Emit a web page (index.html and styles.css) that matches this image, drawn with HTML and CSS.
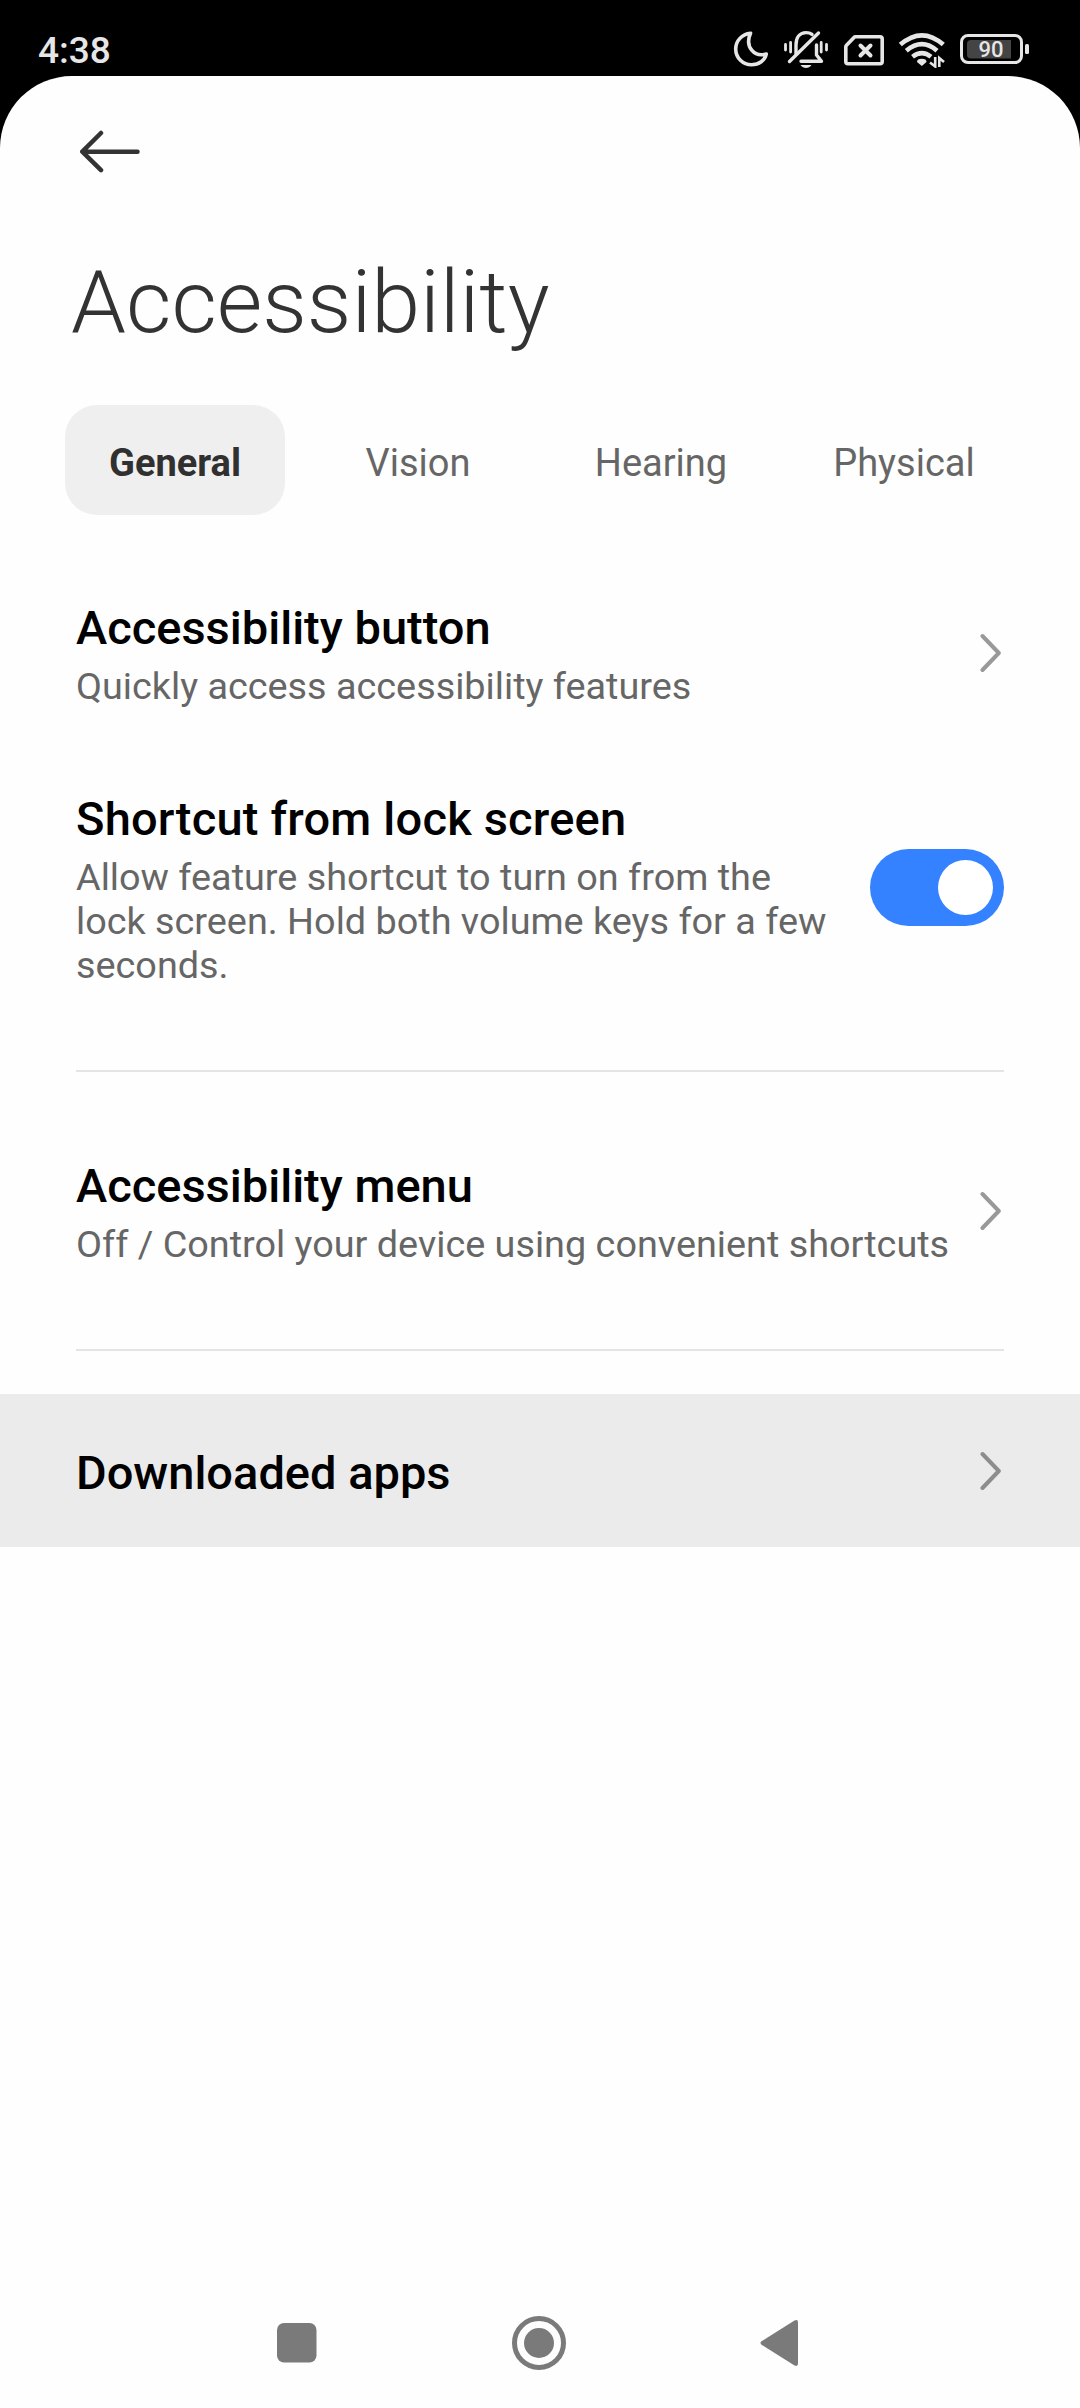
FILE: index.html
```html
<!DOCTYPE html>
<html lang="en">
<head>
<meta charset="utf-8">
<title>Accessibility</title>
<link rel="stylesheet" href="styles.css">
</head>
<body>
<div class="phone">
  <header class="status">
    <span class="clock">4:38</span>
    <div class="status-icons">
      <svg class="moon" width="38" height="40" viewBox="732 29 38 40" fill="none" stroke="#e6e6e6" stroke-width="3.6" stroke-linejoin="round"><path d="M750.500 33.200C742 34 735.700 41 735.700 49C735.700 58 743 64.700 751.500 64.700C759 64.700 765 60.500 766.300 54C754.500 57.500 744.500 47 750.500 33.200Z"/></svg>
      <svg class="bell" width="46" height="40" viewBox="783 29 46 40" fill="none" stroke="#e6e6e6" stroke-width="3.4" stroke-linecap="round" stroke-linejoin="round"><path d="M796 54V45C796 37 800 32.600 806 32.600C808.500 32.600 810.500 33.200 812 34.400"/><path d="M801 61.200H821.500L816.500 55V45"/><path d="M789.500 61.500L818.500 33"/><path d="M785.500 44.500V50M790.600 42.500V52M821.200 42.500V52M826.500 44.500V50" stroke-width="2.8"/><path d="M800.500 65H811.500C809 69 803 69 800.500 65Z" fill="#e6e6e6" stroke="none"/></svg>
      <svg class="sim" width="42" height="34" viewBox="843 33 42 34" fill="none" stroke="#e6e6e6" stroke-width="3.600" stroke-linecap="round" stroke-linejoin="round"><path d="M855.500 36.800H880Q882.200 36.800 882.200 39V61.500Q882.200 63.800 880 63.800H848Q845.800 63.800 845.800 61.500V47Q845.800 46 846.500 45.300L854 37.500Q854.600 36.800 855.500 36.800Z"/><path d="M860.500 49.500L870.500 59.500M870.500 49.500L860.500 59.500" stroke-width="4" transform="translate(0 -4)"/></svg>
      <svg class="wifi" width="48" height="36" viewBox="898 32 48 36" fill="none" stroke="#e6e6e6" stroke-width="4.600"><path d="M900.300 44.600Q922 26 943.300 44.600"/><path d="M906.300 50.700Q922 37.500 937 50.700"/><path d="M912.500 56.800Q922 49.500 931 56.800"/><path d="M917 62Q917 58.800 921.800 58.800Q926.500 58.800 926.500 62L921.800 66Z" fill="#e6e6e6" stroke="none"/><path d="M935.200 57V66.500L930 62.500M939.300 67V58L944 62" stroke-width="2.600"/></svg>
      <svg class="battery" width="70" height="32" viewBox="960 33 70 32" fill="none"><rect x="961.500" y="35.500" width="60" height="27" rx="6.500" stroke="#e6e6e6" stroke-width="3"/><path d="M971 40H1011V58.500H971Q967 58.500 967 54.500V44Q967 40 971 40Z" fill="#444"/><rect x="1025" y="44" width="4" height="10" rx="1.500" fill="#e6e6e6"/><text class="level" x="991" y="57.300" text-anchor="middle">90</text></svg>
    </div>
  </header>
  <main class="sheet">
    <nav class="topbar">
      <svg width="62" height="44" viewBox="79 130 62 44" fill="none" stroke="#333" stroke-width="4.500" stroke-linecap="round" stroke-linejoin="round"><path d="M101 133L82.300 151.700L101 170.200M83 151.700H137.500"/></svg>
    </nav>
    <h1 class="title">Accessibility</h1>
    <div class="tabs">
      <div class="tab active">General</div>
      <div class="tab">Vision</div>
      <div class="tab">Hearing</div>
      <div class="tab">Physical</div>
    </div>
    <section class="list">
      <div class="row">
        <div class="text"><h2>Accessibility button</h2><p>Quickly access accessibility features</p></div>
        <svg class="chevron" width="24" height="40" viewBox="0 0 24 40"><path d="M2.500 3L18.800 20L2.500 37"/></svg>
      </div>
      <div class="row tall">
        <div class="text"><h2>Shortcut from lock screen</h2><p>Allow feature shortcut to turn on from the lock screen. Hold both volume keys for a few seconds.</p></div>
        <div class="switch"><div class="knob"></div></div>
      </div>
      <div class="divider"></div>
      <div class="row">
        <div class="text"><h2>Accessibility menu</h2><p>Off / Control your device using convenient shortcuts</p></div>
        <svg class="chevron" width="24" height="40" viewBox="0 0 24 40"><path d="M2.500 3L18.800 20L2.500 37"/></svg>
      </div>
      <div class="divider"></div>
      <div class="row pressed">
        <div class="text"><h2>Downloaded apps</h2></div>
        <svg class="chevron" width="24" height="40" viewBox="0 0 24 40"><path d="M2.500 3L18.800 20L2.500 37"/></svg>
      </div>
    </section>
    <footer class="navbar">
      <svg width="56" height="56" viewBox="0 0 56 56"><rect x="8" y="8" width="39.500" height="39.500" rx="7"/></svg>
      <svg width="56" height="56" viewBox="0 0 56 56"><circle cx="28" cy="28" r="24.500" fill="none" stroke="#7a7a7a" stroke-width="5"/><circle cx="28" cy="28" r="15"/></svg>
      <svg width="56" height="56" viewBox="0 0 56 56"><path d="M9.500 26.300L42.500 5.500Q46 4 46 7.500V48.500Q46 52 42.500 50.500L9.500 29.700Q7.500 28 9.500 26.300Z"/></svg>
    </footer>
  </main>
</div>
</body>
</html>
```
FILE: styles.css
```css
* {
  box-sizing: border-box;
  margin: 0;
  padding: 0;
}

body {
  background: #000;
  font-family: Roboto, "Liberation Sans", sans-serif;
}

svg {
  display: block;
  flex: none;
}

.phone {
  display: flex;
  flex-direction: column;
  width: 1080px;
  height: 2408px;
  background: #000;
}

.status {
  display: flex;
  justify-content: space-between;
  height: 76px;
  padding: 0 50px 0 38px;
}

.clock {
  padding-top: 29px;
  font-size: 37px;
  font-weight: 500;
  line-height: 44px;
  color: #e6e6e6;
}

.status-icons {
  display: flex;
  align-items: flex-start;
}

.moon { margin: 29px 13px 0 0; }
.bell { margin: 29px 14px 0 0; }
.sim { margin: 33px 13px 0 0; }
.wifi { margin: 32px 14px 0 0; }
.battery { margin-top: 33px; }

.level {
  font-size: 22px;
  font-weight: 500;
  fill: #e6e6e6;
}

.sheet {
  display: flex;
  flex: 1;
  flex-direction: column;
  background: #fefefe;
  border-radius: 72px 72px 0 0;
}

.topbar {
  height: 152px;
  padding: 54px 0 0 79px;
}

.title {
  height: 177px;
  padding: 22px 0 0 71px;
  font-size: 88px;
  font-weight: 300;
  line-height: 104px;
  color: #333;
}

.tabs {
  display: grid;
  grid-template-columns: repeat(4, 220px);
  justify-content: space-between;
  height: 110px;
  margin: 0 66px 0 65px;
}

.tab {
  height: 110px;
  padding-top: 6px;
  border-radius: 32px;
  font-size: 38px;
  line-height: 104px;
  text-align: center;
  color: #666;
}

.tab.active {
  background: #efefef;
  font-weight: 700;
  color: #303030;
}

.list {
  padding-top: 42px;
}

.row {
  display: flex;
  align-items: center;
  justify-content: space-between;
  height: 191px;
  padding: 0 76px;
}

.row.tall {
  height: 279px;
}

.row.pressed {
  height: 153px;
  background: #ebebeb;
}

.text {
  padding-top: 4px;
}

.row.tall .text {
  width: 770px;
}

.row h2 {
  font-size: 47px;
  font-weight: 500;
  line-height: 54px;
  color: #000;
}

.row.tall h2 {
  letter-spacing: 0.2px;
}

.row p {
  padding-top: 9px;
  font-size: 37.8px;
  line-height: 44px;
  white-space: nowrap;
  color: #666;
}

.row.tall p {
  white-space: normal;
}

.chevron {
  fill: none;
  stroke: #999;
  stroke-width: 4;
  stroke-linecap: round;
  stroke-linejoin: round;
}

.pressed .chevron {
  stroke: #8d8d8d;
}

.switch {
  display: flex;
  justify-content: flex-end;
  width: 134px;
  height: 77px;
  padding: 11px;
  border-radius: 39px;
  background: #3482ff;
}

.knob {
  width: 55px;
  height: 55px;
  border-radius: 50%;
  background: #fff;
}

.divider {
  height: 2px;
  margin: 43px 76px;
  background: #e4e4e4;
}

.navbar {
  display: flex;
  justify-content: space-between;
  margin-top: auto;
  padding: 0 272px 37px 269px;
  fill: #7a7a7a;
}
```
